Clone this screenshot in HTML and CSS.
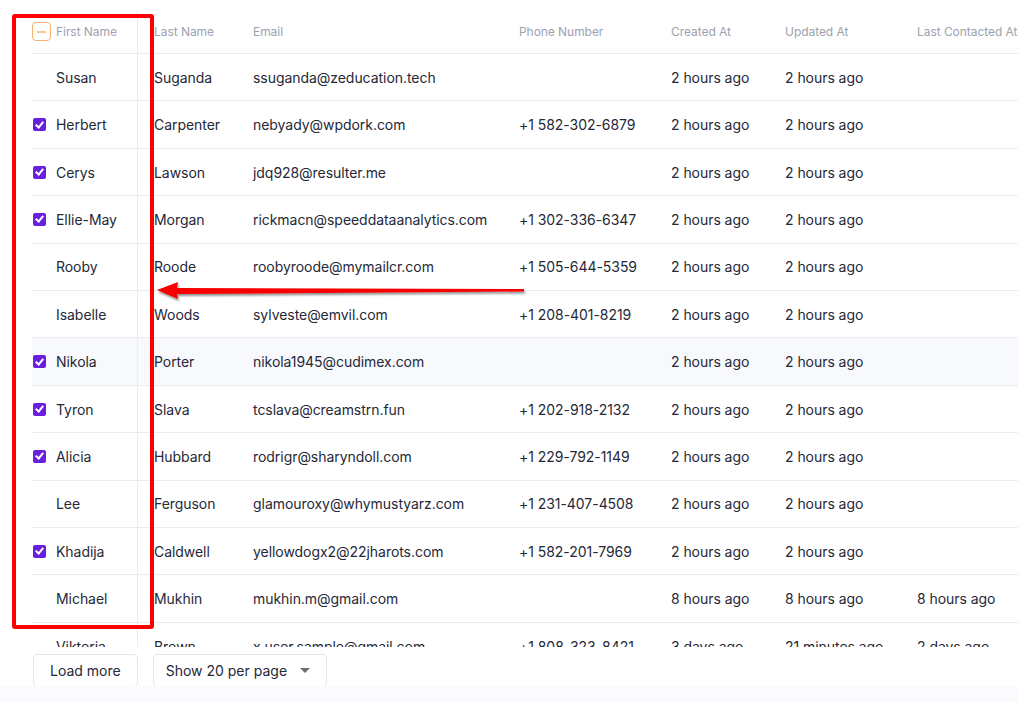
FILE: index.html
```html
<!DOCTYPE html>
<html lang="en">
<head>
  <meta charset="UTF-8">
  <title>People</title>
  <link rel="stylesheet" href="styles.css">
</head>
<body>

  <div class="page">
    <div class="table-wrap">
      <div class="row head">
        <div class="cell first">
          <span class="check partial"><span class="dash"></span></span>
          <span>First Name</span>
        </div>
        <div class="cell split">Last Name</div>
        <div class="cell">Email</div>
        <div class="cell">Phone Number</div>
        <div class="cell">Created At</div>
        <div class="cell">Updated At</div>
        <div class="cell">Last Contacted At</div>
      </div>

      <div class="row">
        <div class="cell first"><span class="check empty"></span>Susan</div>
        <div class="cell split">Suganda</div>
        <div class="cell">ssuganda@zeducation.tech</div>
        <div class="cell"></div>
        <div class="cell">2 hours ago</div>
        <div class="cell">2 hours ago</div>
        <div class="cell"></div>
      </div>
      <div class="row">
        <div class="cell first"><span class="check on"></span>Herbert</div>
        <div class="cell split">Carpenter</div>
        <div class="cell">nebyady@wpdork.com</div>
        <div class="cell">+1 582-302-6879</div>
        <div class="cell">2 hours ago</div>
        <div class="cell">2 hours ago</div>
        <div class="cell"></div>
      </div>
      <div class="row">
        <div class="cell first"><span class="check on"></span>Cerys</div>
        <div class="cell split">Lawson</div>
        <div class="cell">jdq928@resulter.me</div>
        <div class="cell"></div>
        <div class="cell">2 hours ago</div>
        <div class="cell">2 hours ago</div>
        <div class="cell"></div>
      </div>
      <div class="row">
        <div class="cell first"><span class="check on"></span>Ellie-May</div>
        <div class="cell split">Morgan</div>
        <div class="cell">rickmacn@speeddataanalytics.com</div>
        <div class="cell">+1 302-336-6347</div>
        <div class="cell">2 hours ago</div>
        <div class="cell">2 hours ago</div>
        <div class="cell"></div>
      </div>
      <div class="row">
        <div class="cell first"><span class="check empty"></span>Rooby</div>
        <div class="cell split">Roode</div>
        <div class="cell">roobyroode@mymailcr.com</div>
        <div class="cell">+1 505-644-5359</div>
        <div class="cell">2 hours ago</div>
        <div class="cell">2 hours ago</div>
        <div class="cell"></div>
      </div>
      <div class="row">
        <div class="cell first"><span class="check empty"></span>Isabelle</div>
        <div class="cell split">Woods</div>
        <div class="cell">sylveste@emvil.com</div>
        <div class="cell">+1 208-401-8219</div>
        <div class="cell">2 hours ago</div>
        <div class="cell">2 hours ago</div>
        <div class="cell"></div>
      </div>
      <div class="row hover">
        <div class="cell first"><span class="check on"></span>Nikola</div>
        <div class="cell split">Porter</div>
        <div class="cell">nikola1945@cudimex.com</div>
        <div class="cell"></div>
        <div class="cell">2 hours ago</div>
        <div class="cell">2 hours ago</div>
        <div class="cell"></div>
      </div>
      <div class="row">
        <div class="cell first"><span class="check on"></span>Tyron</div>
        <div class="cell split">Slava</div>
        <div class="cell">tcslava@creamstrn.fun</div>
        <div class="cell">+1 202-918-2132</div>
        <div class="cell">2 hours ago</div>
        <div class="cell">2 hours ago</div>
        <div class="cell"></div>
      </div>
      <div class="row">
        <div class="cell first"><span class="check on"></span>Alicia</div>
        <div class="cell split">Hubbard</div>
        <div class="cell">rodrigr@sharyndoll.com</div>
        <div class="cell">+1 229-792-1149</div>
        <div class="cell">2 hours ago</div>
        <div class="cell">2 hours ago</div>
        <div class="cell"></div>
      </div>
      <div class="row">
        <div class="cell first"><span class="check empty"></span>Lee</div>
        <div class="cell split">Ferguson</div>
        <div class="cell">glamouroxy@whymustyarz.com</div>
        <div class="cell">+1 231-407-4508</div>
        <div class="cell">2 hours ago</div>
        <div class="cell">2 hours ago</div>
        <div class="cell"></div>
      </div>
      <div class="row">
        <div class="cell first"><span class="check on"></span>Khadija</div>
        <div class="cell split">Caldwell</div>
        <div class="cell">yellowdogx2@22jharots.com</div>
        <div class="cell">+1 582-201-7969</div>
        <div class="cell">2 hours ago</div>
        <div class="cell">2 hours ago</div>
        <div class="cell"></div>
      </div>
      <div class="row">
        <div class="cell first"><span class="check empty"></span>Michael</div>
        <div class="cell split">Mukhin</div>
        <div class="cell">mukhin.m@gmail.com</div>
        <div class="cell"></div>
        <div class="cell">8 hours ago</div>
        <div class="cell">8 hours ago</div>
        <div class="cell">8 hours ago</div>
      </div>
      <div class="row">
        <div class="cell first"><span class="check empty"></span>Viktoria</div>
        <div class="cell split">Brown</div>
        <div class="cell">x.user.sample@gmail.com</div>
        <div class="cell">+1 808-323-8421</div>
        <div class="cell">3 days ago</div>
        <div class="cell">21 minutes ago</div>
        <div class="cell">2 days ago</div>
      </div>
    </div>

    <div class="footer">
      <button class="btn">Load more</button>
      <button class="btn select">Show 20 per page <span class="caret"></span></button>
    </div>
  </div>

  <!-- screenshot annotations -->
  <div class="mark-box"></div>
  <svg class="mark-arrow" width="390" height="30" viewBox="0 0 390 30">
    <defs>
      <filter id="shadow" x="-5%" y="-50%" width="110%" height="200%">
        <feDropShadow dx="1" dy="2" stdDeviation="1.2" flood-color="#000" flood-opacity="0.45"/>
      </filter>
    </defs>
    <path d="M5 14 L26 6 L25 12 L372 13 L372 15.5 L25 18 L26 23 Z" fill="#f80000" filter="url(#shadow)"/>
  </svg>

</body>
</html>
```

FILE: styles.css
```css
body {
  margin: 0;
  background: #fbfaff;
  font-family: Inter, "Noto Sans", sans-serif;
  color: #252837;
}
.page {
  background: #fff;
  height: 686px;
  padding-left: 32px;
  padding-top: 10px;
  box-sizing: border-box;
}
.table-wrap {
  height: 637px;
  overflow: hidden;
}
.row {
  display: grid;
  grid-template-columns: 105px 100px 266px 152px 114px 132px 1fr;
  height: 47.42px;
  box-sizing: border-box;
  border-bottom: 1px solid #ebecf1;
  font-size: 14px;
  letter-spacing: -0.05px;
}
.row.head {
  height: 44px;
  font-size: 12px;
  color: #9ca2b0;
}
.row.hover {
  background: #f8f9fc;
}
.cell {
  display: flex;
  align-items: center;
  padding-left: 16px;
  white-space: nowrap;
}
.cell.first {
  padding-left: 0;
}
.cell.split {
  border-left: 1px solid #ebecf1;
}
.check {
  width: 13px;
  height: 13px;
  margin: 0 10px 0 1px;
  border-radius: 2px;
  flex-shrink: 0;
  position: relative;
}
.check.on {
  background: #6a1fe0;
}
.check.on::after {
  content: "";
  position: absolute;
  left: 4px;
  top: 1.5px;
  width: 3px;
  height: 6px;
  border: solid #fff;
  border-width: 0 2px 2px 0;
  transform: rotate(40deg);
}
.check.partial {
  width: 19px;
  height: 19px;
  margin: 0 5px 0 0;
  border: 1.5px solid #f7b26c;
  border-radius: 4px;
  box-sizing: border-box;
  display: flex;
  align-items: center;
  justify-content: center;
}
.dash {
  width: 9px;
  height: 2px;
  background: #fbc690;
}
.footer {
  display: flex;
  gap: 15px;
  padding-top: 7px;
  padding-left: 1px;
}
.btn {
  height: 33px;
  padding: 0 16px;
  background: #fff;
  border: 1px solid #e6e7ec;
  border-radius: 4px;
  font-family: inherit;
  font-size: 14px;
  color: #252837;
}
.btn.select {
  display: flex;
  align-items: center;
  padding: 0 10px 0 12px;
  width: 174px;
}
.caret {
  margin-left: auto;
  margin-right: 6px;
  border-left: 5px solid transparent;
  border-right: 5px solid transparent;
  border-top: 5px solid #6b6e78;
}
.mark-box {
  position: absolute;
  left: 12px;
  top: 14px;
  width: 134px;
  height: 607px;
  border: 4px solid #fe0000;
  border-radius: 3px;
}
.mark-arrow {
  position: absolute;
  left: 152px;
  top: 276px;
}
```
